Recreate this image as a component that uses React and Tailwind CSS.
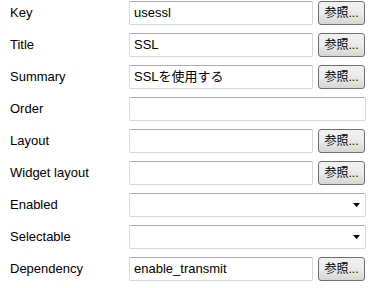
import React from 'react'

const rows = [
  { label: 'Key', value: 'usessl', kind: 'browse' },
  { label: 'Title', value: 'SSL', kind: 'browse' },
  { label: 'Summary', value: 'SSLを使用する', kind: 'browse' },
  { label: 'Order', value: '', kind: 'text' },
  { label: 'Layout', value: '', kind: 'browse' },
  { label: 'Widget layout', value: '', kind: 'browse' },
  { label: 'Enabled', value: '', kind: 'select' },
  { label: 'Selectable', value: '', kind: 'select' },
  { label: 'Dependency', value: 'enable_transmit', kind: 'browse' },
]

function Field({ value, wide }) {
  return (
    <div
      className={`${wide ? 'w-[237px]' : 'w-[184px]'} h-[24px] flex items-center pl-[4px] bg-white border border-[#d5dbe2] border-t-[#a9adb4] rounded-[2px] text-[13px] text-black`}
    >
      {value}
    </div>
  )
}

function Select() {
  return (
    <div className="w-[237px] h-[24px] flex items-center justify-end pr-[5px] bg-white border border-[#d5dbe2] border-t-[#a9adb4] rounded-[2px]">
      <svg width="7" height="4" viewBox="0 0 7 4">
        <path d="M0 0h7L3.5 4z" fill="#000" />
      </svg>
    </div>
  )
}

function Browse() {
  return (
    <button className="ml-[5px] w-[47px] h-[24px] flex items-center justify-center rounded-[3px] border border-[#707070] bg-gradient-to-b from-[#f2f2f2] via-[#ebebeb] to-[#d6d6d6] text-[12px] text-black leading-none">
      参照...
    </button>
  )
}

export default function App() {
  return (
    <div
      className="w-[379px] h-[288px] bg-white overflow-hidden"
      style={{ fontFamily: '"Liberation Sans", "Noto Sans CJK JP", sans-serif' }}
    >
      {rows.map((r) => (
        <div key={r.label} className="h-[32px] flex items-start pt-[1px]">
          <div className="w-[129px] h-[24px] flex items-center pl-[10px] text-[13px] text-black">
            {r.label}
          </div>
          {r.kind === 'browse' && (
            <>
              <Field value={r.value} />
              <Browse />
            </>
          )}
          {r.kind === 'text' && <Field value={r.value} wide />}
          {r.kind === 'select' && <Select />}
        </div>
      ))}
    </div>
  )
}
